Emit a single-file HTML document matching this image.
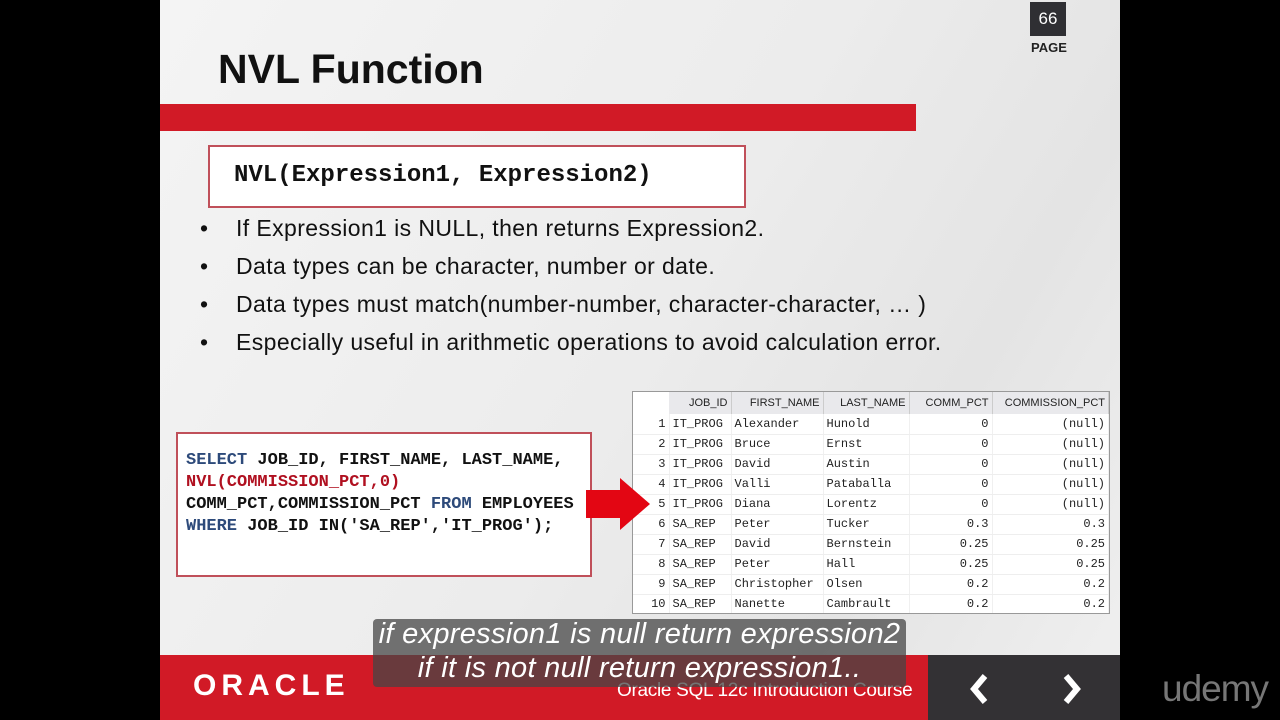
<!DOCTYPE html>
<html><head><meta charset="utf-8"><style>
*{margin:0;padding:0;box-sizing:border-box}
body{width:1280px;height:720px;background:#000;position:relative;overflow:hidden;font-family:"Liberation Sans",sans-serif}
.slide{position:absolute;left:160px;top:0;width:960px;height:720px;background:linear-gradient(120deg,#f4f4f4 0%,#ececec 50%,#e4e4e4 75%,#f0f0f0 100%);overflow:hidden}
.abs{position:absolute}
.bul{position:absolute;left:40px;font-size:23px;color:#111}
.bul span{position:absolute;left:0}
.bul b{font-weight:normal;position:absolute;left:36px;white-space:nowrap;letter-spacing:0.4px}
table{border-collapse:collapse;font-family:"Liberation Mono",monospace;font-size:12px;color:#222}
td{height:20px;border-bottom:1px solid #eee;border-right:1px solid #f0f0f0;padding:0 3px;white-space:nowrap}
th{height:22px;background:#e9e9ec;font-family:"Liberation Sans",sans-serif;font-weight:normal;font-size:11px;border-right:1px solid #ccc;text-align:right;padding:0 3px}
.r{text-align:right}
</style></head><body>
<div class="slide">
 <div class="abs" style="left:870px;top:2px;width:36px;height:34px;background:#2f2f33;color:#fff;font-size:17px;text-align:center;line-height:34px">66</div>
 <div class="abs" style="left:871px;top:40px;font-size:13px;font-weight:bold;color:#222">PAGE</div>
 <div class="abs" style="left:58px;top:46px;font-size:41px;font-weight:bold;color:#111;letter-spacing:0px">NVL Function</div>
 <div class="abs" style="left:0;top:104px;width:756px;height:27px;background:#d11a26"></div>
 <div class="abs" style="left:48px;top:145px;width:538px;height:63px;background:#fff;border:2px solid #c0505a;font-family:'Liberation Mono',monospace;font-weight:bold;font-size:24px;line-height:57px;padding-left:24px;color:#111">NVL(Expression1, Expression2)</div>
 <div class="bul" style="top:215px"><span>•</span><b>If Expression1 is NULL, then returns Expression2.</b></div>
 <div class="bul" style="top:253px"><span>•</span><b>Data types can be character, number or date.</b></div>
 <div class="bul" style="top:291px"><span>•</span><b>Data types must match(number-number, character-character, … )</b></div>
 <div class="bul" style="top:329px"><span>•</span><b>Especially useful in arithmetic operations to avoid calculation error.</b></div>
 <div class="abs" style="left:16px;top:432px;width:416px;height:145px;background:#fff;border:2px solid #c0505a;font-family:'Liberation Mono',monospace;font-weight:bold;font-size:17px;line-height:22px;padding:16px 0 0 8px;color:#111;white-space:pre"><span style="color:#2d4a7a">SELECT</span> JOB_ID, FIRST_NAME, LAST_NAME,
<span style="color:#b01020">NVL(COMMISSION_PCT,0)</span>
COMM_PCT,COMMISSION_PCT <span style="color:#2d4a7a">FROM</span> EMPLOYEES
<span style="color:#2d4a7a">WHERE</span> JOB_ID IN('SA_REP','IT_PROG');</div>
 <div class="abs" style="left:472px;top:391px;width:478px;height:223px;background:#fff;border:1px solid #999;overflow:hidden">
 <table style="width:476px">
  <tr><th style="width:36px;background:#fff;border:none"></th><th style="width:62px">JOB_ID</th><th style="width:92px">FIRST_NAME</th><th style="width:86px">LAST_NAME</th><th style="width:83px">COMM_PCT</th><th>COMMISSION_PCT</th></tr>
  <tr><td class="r">1</td><td>IT_PROG</td><td>Alexander</td><td>Hunold</td><td class="r">0</td><td class="r">(null)</td></tr>
  <tr><td class="r">2</td><td>IT_PROG</td><td>Bruce</td><td>Ernst</td><td class="r">0</td><td class="r">(null)</td></tr>
  <tr><td class="r">3</td><td>IT_PROG</td><td>David</td><td>Austin</td><td class="r">0</td><td class="r">(null)</td></tr>
  <tr><td class="r">4</td><td>IT_PROG</td><td>Valli</td><td>Pataballa</td><td class="r">0</td><td class="r">(null)</td></tr>
  <tr><td class="r">5</td><td>IT_PROG</td><td>Diana</td><td>Lorentz</td><td class="r">0</td><td class="r">(null)</td></tr>
  <tr><td class="r">6</td><td>SA_REP</td><td>Peter</td><td>Tucker</td><td class="r">0.3</td><td class="r">0.3</td></tr>
  <tr><td class="r">7</td><td>SA_REP</td><td>David</td><td>Bernstein</td><td class="r">0.25</td><td class="r">0.25</td></tr>
  <tr><td class="r">8</td><td>SA_REP</td><td>Peter</td><td>Hall</td><td class="r">0.25</td><td class="r">0.25</td></tr>
  <tr><td class="r">9</td><td>SA_REP</td><td>Christopher</td><td>Olsen</td><td class="r">0.2</td><td class="r">0.2</td></tr>
  <tr><td class="r">10</td><td>SA_REP</td><td>Nanette</td><td>Cambrault</td><td class="r">0.2</td><td class="r">0.2</td></tr>
 </table></div>
 <svg class="abs" style="left:424px;top:476px" width="68" height="56"><polygon points="2,14 36,14 36,2 66,28 36,54 36,42 2,42" fill="#e30613"/></svg>
 <div class="abs" style="left:0;top:655px;width:768px;height:65px;background:#d11a26"></div>
 <div class="abs" style="left:768px;top:655px;width:192px;height:65px;background:#333134"></div>
 <div class="abs" style="left:33px;top:669px;font-size:30px;font-weight:bold;color:#fff;letter-spacing:5px">ORACLE</div>
 <div class="abs" style="left:457px;top:680px;font-size:19px;color:#fff;letter-spacing:-0.3px">Oracle SQL 12c Introduction Course</div>
 <svg class="abs" style="left:805px;top:672px" width="30" height="34"><path d="M20 4 L9 17 L20 30" stroke="#fff" stroke-width="6" fill="none"/></svg>
 <svg class="abs" style="left:896px;top:672px" width="30" height="34"><path d="M10 4 L21 17 L10 30" stroke="#fff" stroke-width="6" fill="none"/></svg>
</div>
<div class="abs" style="left:373px;top:619px;width:533px;height:68px;background:rgba(70,70,70,0.75);border-radius:4px"></div>
<div class="abs" style="left:353px;top:617px;width:573px;text-align:center;color:#fff;font-style:italic;font-size:29px;line-height:34px;letter-spacing:0.3px">if expression1 is null return expression2<br>if it is not null return expression1..</div>
<div class="abs" style="left:1162px;top:668px;font-size:37px;color:#777;letter-spacing:-1px">udemy</div>
</body></html>
